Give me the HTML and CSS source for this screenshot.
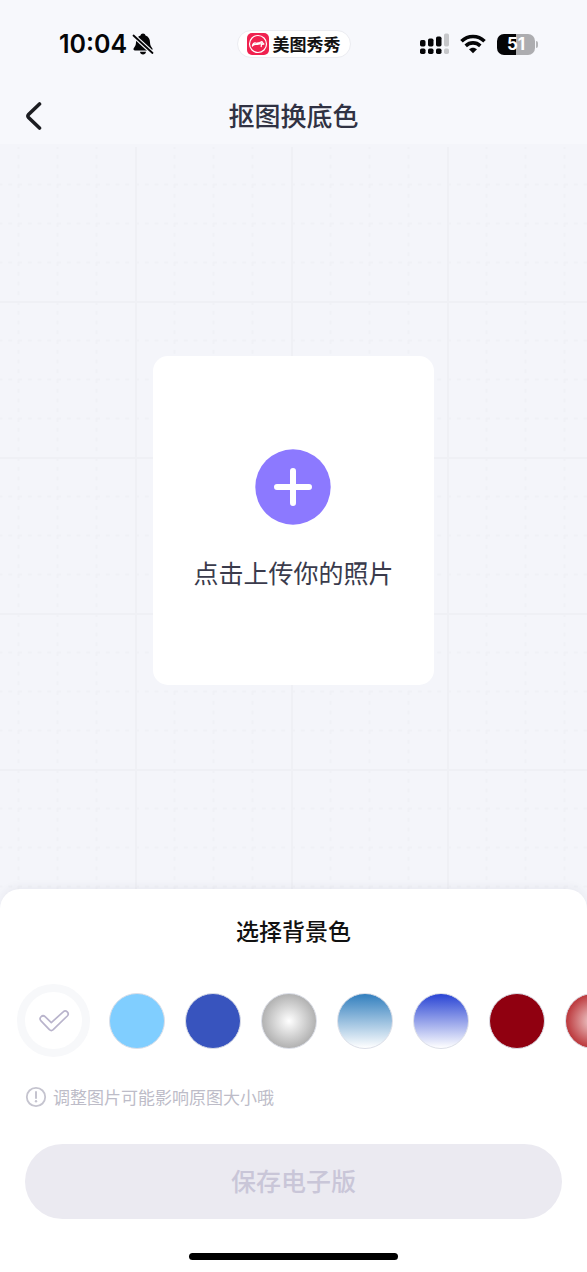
FILE: index.html
```
<!DOCTYPE html>
<html lang="zh-CN">
<head>
<meta charset="utf-8">
<meta name="viewport" content="width=device-width, initial-scale=1">
<title>抠图换底色</title>
<link rel="stylesheet" href="styles.css">
</head>
<body>
<div class="screen">
  <div class="status">
    <div class="status-left">
      <span class="time">10:04</span>
      <svg class="bell" width="22" height="22" viewBox="0 0 22 22" aria-hidden="true">
        <path d="M11 .5C9.700 .5 8.700 1.300 8.500 2.400C5.400 3.500 4 6 4 9.300C4 12.500 2.900 13.600 1.700 15.200C1.100 16.200 1.600 17.500 3 17.500H19C20.400 17.500 20.900 16.200 20.300 15.200C19.100 13.600 18 12.500 18 9.300C18 6 16.600 3.500 13.500 2.400C13.300 1.300 12.300 .5 11 .5ZM8 18.800H14C13.800 20.600 12.600 21.600 11 21.600S8.200 20.600 8 18.800Z" fill="#050507"/>
        <path d="M1 2L21 20.500" stroke="#f7f8fc" stroke-width="4.200"/>
        <path d="M1.500 2.500L20.500 20" stroke="#050507" stroke-width="1.800" stroke-linecap="round"/>
      </svg>
    </div>
    <div class="app-pill">
      <svg width="22" height="22" viewBox="0 0 22 22" aria-hidden="true">
        <rect width="22" height="22" rx="5" fill="#f0214f"/>
        <circle cx="11" cy="11" r="8.500" fill="none" stroke="#fff" stroke-width="1.200"/>
        <path d="M5.500 13C5.600 10.600 7 9.600 9 10.200C10.500 10.700 11.300 9.600 12.600 9.600L15 8.600L15.300 9.600L16.800 11L14.800 11.300C14.300 12 14.200 12.700 14.200 13.500M6 12.300C7.500 10.800 9 11.500 10.500 11.300C12 11.200 13 10.800 14.500 10.600" fill="none" stroke="#fff" stroke-width="1.300" stroke-linejoin="round" stroke-linecap="round"/>
      </svg>
      <span>美图秀秀</span>
    </div>
    <div class="status-right">
      <svg width="30" height="22" viewBox="0 0 30 22" aria-hidden="true">
        <g fill="#050507">
          <rect x="1" y="7" width="5.500" height="6.500" rx="1.700"/><rect x="9" y="5.500" width="5.500" height="8" rx="1.700"/><rect x="17" y="3.500" width="5.500" height="10" rx="1.700"/>
          <rect x="1" y="15.500" width="5.500" height="5.500" rx="1.700"/><rect x="9" y="15.500" width="5.500" height="5.500" rx="1.700"/><rect x="17" y="15.500" width="5.500" height="5.500" rx="1.700"/>
        </g>
        <g fill="#c6c7ca"><rect x="25" y=".5" width="5" height="13" rx="1.700"/><rect x="25" y="15.500" width="5" height="5.500" rx="1.700"/></g>
      </svg>
      <svg width="26" height="20" viewBox="0 0 26 20" aria-hidden="true">
        <g fill="none" stroke="#050507" stroke-width="3.600"><path d="M1.500 7.300C8 .9 18 .9 24.500 7.300"/><path d="M5.700 11.800C10 7.900 16 7.900 20.300 11.800"/></g>
        <path d="M9 15.200C11.300 13.100 14.700 13.100 17 15.200L13 19.200Z" fill="#050507"/>
      </svg>
      <div class="battery"><span>51</span></div>
    </div>
  </div>
  <header class="nav">
    <button class="back" type="button" aria-label="返回">
      <svg width="18" height="30" viewBox="0 0 18 30" aria-hidden="true"><path d="M15.500 3L4.500 13.500Q3.300 15 4.500 16.500L15.500 27" fill="none" stroke="#1c1d21" stroke-width="3.600" stroke-linecap="round" stroke-linejoin="round"/></svg>
    </button>
    <h1 class="title">抠图换底色</h1>
  </header>
  <main class="canvas">
    <svg class="grid" width="100%" height="100%" aria-hidden="true">
      <defs>
        <pattern id="grid" x="135" y="1" width="156" height="156" patternUnits="userSpaceOnUse">
          <path d="M39.500 0V156M78.500 0V156M117.500 0V156M0 39.500H156M0 78.500H156M0 117.500H156" stroke="#f0f1f6" stroke-width="2" stroke-dasharray="4 5.750"/>
          <path d="M1 0V156M0 1H156" stroke="#eff0f5" stroke-width="2"/>
        </pattern>
      </defs>
      <rect y="3" width="100%" height="100%" fill="url(#grid)"/>
    </svg>
    <button class="upload" type="button">
      <svg width="76" height="76" viewBox="0 0 76 76" aria-hidden="true"><circle cx="38" cy="38" r="37.700" fill="#8c79ff"/><path d="M38 22V54M22 38H54" stroke="#fff" stroke-width="6" stroke-linecap="round"/></svg>
      <span>点击上传你的照片</span>
    </button>
  </main>
  <section class="sheet">
    <h2 class="sheet-title">选择背景色</h2>
    <div class="swatches" role="radiogroup" aria-label="选择背景色">
      <label class="none">
        <input type="radio" name="bg" aria-label="无" checked>
        <svg width="32" height="24" viewBox="0 0 32 24" aria-hidden="true"><path d="M3 11.800A2.900 2.900 0 0 1 7.100 7.700L13.300 13.600L25.200 2.900A2.900 2.900 0 0 1 29.300 7L15.200 20.700Q13.300 22.400 11.400 20.700Z" fill="none" stroke="#b9b4cc" stroke-width="1.700" stroke-linejoin="round"/></svg>
      </label>
      <input class="swatch sky" type="radio" name="bg" aria-label="天蓝">
      <input class="swatch blue" type="radio" name="bg" aria-label="蓝色">
      <input class="swatch gray" type="radio" name="bg" aria-label="灰色渐变">
      <input class="swatch sky-fade" type="radio" name="bg" aria-label="浅蓝渐变">
      <input class="swatch blue-fade" type="radio" name="bg" aria-label="蓝色渐变">
      <input class="swatch red" type="radio" name="bg" aria-label="红色">
      <input class="swatch red-glow" type="radio" name="bg" aria-label="红色渐变">
    </div>
    <p class="note">
      <svg width="22" height="22" viewBox="0 0 22 22" aria-hidden="true"><circle cx="11" cy="11" r="9.200" fill="none" stroke="#c5c4cf" stroke-width="1.800"/><path d="M11 6V12" stroke="#c5c4cf" stroke-width="2" stroke-linecap="round"/><circle cx="11" cy="15.300" r="1.200" fill="#c5c4cf"/></svg>
      <span>调整图片可能影响原图大小哦</span>
    </p>
    <button class="save" type="button" disabled>保存电子版</button>
    <div class="home"></div>
  </section>
</div>
</body>
</html>
```
FILE: styles.css
```
* { box-sizing: border-box; }
body {
  margin: 0;
  background: #f7f8fc;
  font-family: "Noto Sans CJK SC", sans-serif;
}
button { border: 0; padding: 0; font-family: inherit; }
svg { display: block; flex: none; }
.screen { min-height: 100vh; display: flex; flex-direction: column; overflow: hidden; }

.status {
  height: 88px;
  padding: 0 52px;
  display: grid;
  grid-template-columns: 1fr auto 1fr;
  align-items: center;
}
.status-left { padding-left: 7px; display: flex; align-items: center; gap: 5px; }
.time { font: 600 25px/30px Inter, sans-serif; color: #050507; }
.app-pill {
  height: 28px;
  padding: 0 9px;
  display: flex;
  align-items: center;
  gap: 4px;
  border: 1px solid #ebecf1;
  border-radius: 14px;
  background: #fff;
  font-size: 17px;
  line-height: 24px;
  font-weight: 700;
  color: #111;
}
.status-right { display: flex; align-items: center; justify-content: flex-end; gap: 11px; }
.battery {
  position: relative;
  width: 38px;
  height: 21px;
  border-radius: 7px;
  background: linear-gradient(90deg, #050507 51%, #adadb0 51%);
  color: #fff;
  font: 700 17px/21px Inter, sans-serif;
  text-align: center;
}
.battery::after {
  content: "";
  position: absolute;
  left: 39px;
  top: 7px;
  width: 2px;
  height: 7px;
  border-radius: 0 2px 2px 0;
  background: #b4b5b8;
}

.nav {
  height: 56px;
  padding: 0 24px;
  display: grid;
  grid-template-columns: 1fr auto 1fr;
  align-items: center;
}
.back { justify-self: start; background: none; }
.title { margin: 0; padding-bottom: 2px; font-size: 26px; line-height: 36px; font-weight: 500; color: #303243; }

.canvas {
  position: relative;
  flex: 1;
  padding: 8px 24px 20px;
  display: flex;
  align-items: center;
  justify-content: center;
  background: #f4f5fa;
}
.grid { position: absolute; inset: 0; }
.upload {
  position: relative;
  padding: 93px 40px 95px;
  display: flex;
  flex-direction: column;
  align-items: center;
  gap: 29px;
  border-radius: 15px;
  background: #fff;
  color: #3a3b4c;
  font-size: 25px;
  line-height: 36px;
}

.sheet {
  position: relative;
  margin-top: -20px;
  padding: 23px 25px 12px;
  border-radius: 20px 20px 0 0;
  background: #fff;
  box-shadow: 0 -2px 10px rgba(50, 50, 90, 0.06);
}
.sheet-title { margin: 0; font-size: 23px; line-height: 36px; font-weight: 500; color: #111; text-align: center; }
.swatches {
  margin: 36px -25px 0;
  padding-left: 17px;
  display: flex;
  align-items: center;
  gap: 20px;
  overflow: hidden;
}
.swatches input { appearance: none; margin: 0; flex: none; border-radius: 50%; }
.none { display: grid; flex: none; place-items: center; margin-right: -1px; }
.none > * { grid-area: 1 / 1; }
.none input { width: 73px; height: 73px; border: 8px solid #f7f8fa; }
.swatch { width: 56px; height: 56px; border: 1px solid #dcdfe8; background-origin: border-box; }
.sky { background: #80ceff; }
.blue { background: #3854be; }
.gray { background: radial-gradient(circle, #fff, #adadad 75%); }
.sky-fade { background: linear-gradient(#327fbe, #fff); }
.blue-fade { background: linear-gradient(#2944d4, #fff); }
.red { background: #900010; }
.red-glow { background: radial-gradient(circle, #f2d4d4, #b82e32 75%); }
.note {
  margin: 27px 0 0;
  display: flex;
  align-items: center;
  gap: 6px;
  font-size: 17px;
  line-height: 26px;
  color: #bdbcc8;
}
.save {
  width: 100%;
  height: 75px;
  margin-top: 34px;
  padding-bottom: 3px;
  border-radius: 38px;
  background: #ebeaf1;
  color: #c9c6d8;
  font-size: 25px;
  line-height: 36px;
  font-weight: 500;
}
.home { width: 209px; height: 7px; margin: 34px auto 0; border-radius: 4px; background: #000; }
```
